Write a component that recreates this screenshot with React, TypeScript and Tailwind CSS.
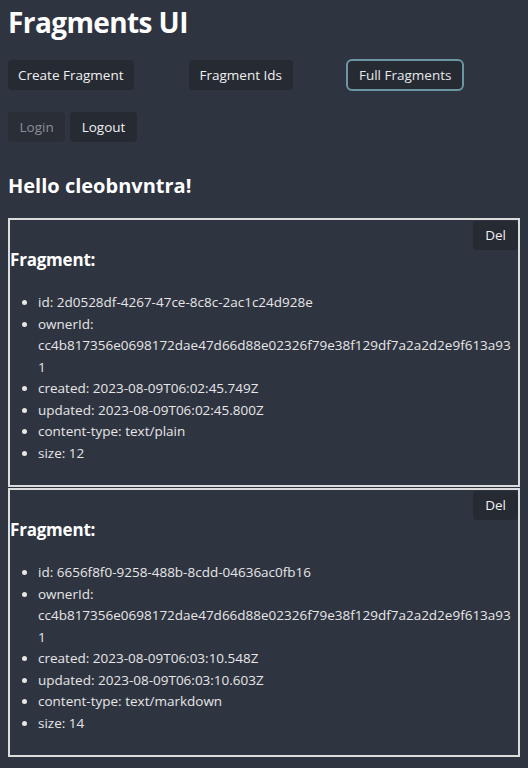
import { useState } from "react";

type Fragment = {
    id: string;
    ownerId: string;
    created: string;
    updated: string;
    type: string;
    size: number;
};

const owner = "cc4b817356e0698172dae47d66d88e02326f79e38f129df7a2a2d2e9f613a931";

const data: Fragment[] = [
    {
        id: "2d0528df-4267-47ce-8c8c-2ac1c24d928e",
        ownerId: owner,
        created: "2023-08-09T06:02:45.749Z",
        updated: "2023-08-09T06:02:45.800Z",
        type: "text/plain",
        size: 12,
    },
    {
        id: "6656f8f0-9258-488b-8cdd-04636ac0fb16",
        ownerId: owner,
        created: "2023-08-09T06:03:10.548Z",
        updated: "2023-08-09T06:03:10.603Z",
        type: "text/markdown",
        size: 14,
    },
];

// padding is set per button
const base = "h-[30px] rounded-[4px] text-[13.5px]";
const btn = `${base} bg-[#262a33] text-[#f0f0f0]`;

const FragmentCard = ({ f }: { f: Fragment }) => (
    <div className="border-2 border-[#dcdcdc] mb-[1px]">
        <button className="float-right mt-px h-[29px] px-[12px] rounded-[4px] bg-[#262a33] text-[13.5px] text-[#f0f0f0]">Del</button>
        <h3 className="pt-[28px] text-[17px] leading-[24px] font-bold text-white tracking-[-0.2px]">Fragment:</h3>
        <ul className="list-disc pl-[28px] mt-[20px] mb-[21px] text-[13.5px] leading-[21.5px] text-[#e6e6e6] [overflow-wrap:anywhere]">
            <li>id: {f.id}</li>
            <li>ownerId: {f.ownerId}</li>
            <li>created: {f.created}</li>
            <li>updated: {f.updated}</li>
            <li>content-type: {f.type}</li>
            <li>size: {f.size}</li>
        </ul>
    </div>
);

export default function App() {
    const [fragments] = useState<Fragment[]>(data);

    return (
        <div className="min-h-screen bg-[#2f3441] px-2 pt-[4px] font-['Open_Sans',sans-serif]">
            <h1 className="text-[28px] leading-[36px] font-bold text-white tracking-[-0.6px]">Fragments UI</h1>
            {/* nav buttons */}
            <div className="flex mt-[20px]">
                <button className={`${btn} px-[10px]`}>Create Fragment</button>
                <button className={`${btn} px-[11px] ml-[55px]`}>Fragment Ids</button>
                <button className={`${base} px-[11px] ml-[53px] -mt-px h-[32px] bg-[#262a33] text-[#e4e8ea] border-2 border-[#6b97a5] rounded-[6px]`}>Full Fragments</button>
            </div>
            <div className="flex gap-[5px] mt-[21px]">
                <button className={`${base} px-[11.5px] bg-[#2a2e37] text-[#8b8e95]`} disabled>Login</button>
                <button className={`${btn} px-[11.5px]`}>Logout</button>
            </div>
            <h2 className="mt-[30px] text-[20px] leading-[28px] font-bold text-white">Hello cleobnvntra!</h2>
            <div className="mt-[18px]">
                {fragments.map((f) => (
                    <FragmentCard key={f.id} f={f} />
                ))}
            </div>
        </div>
    );
}
